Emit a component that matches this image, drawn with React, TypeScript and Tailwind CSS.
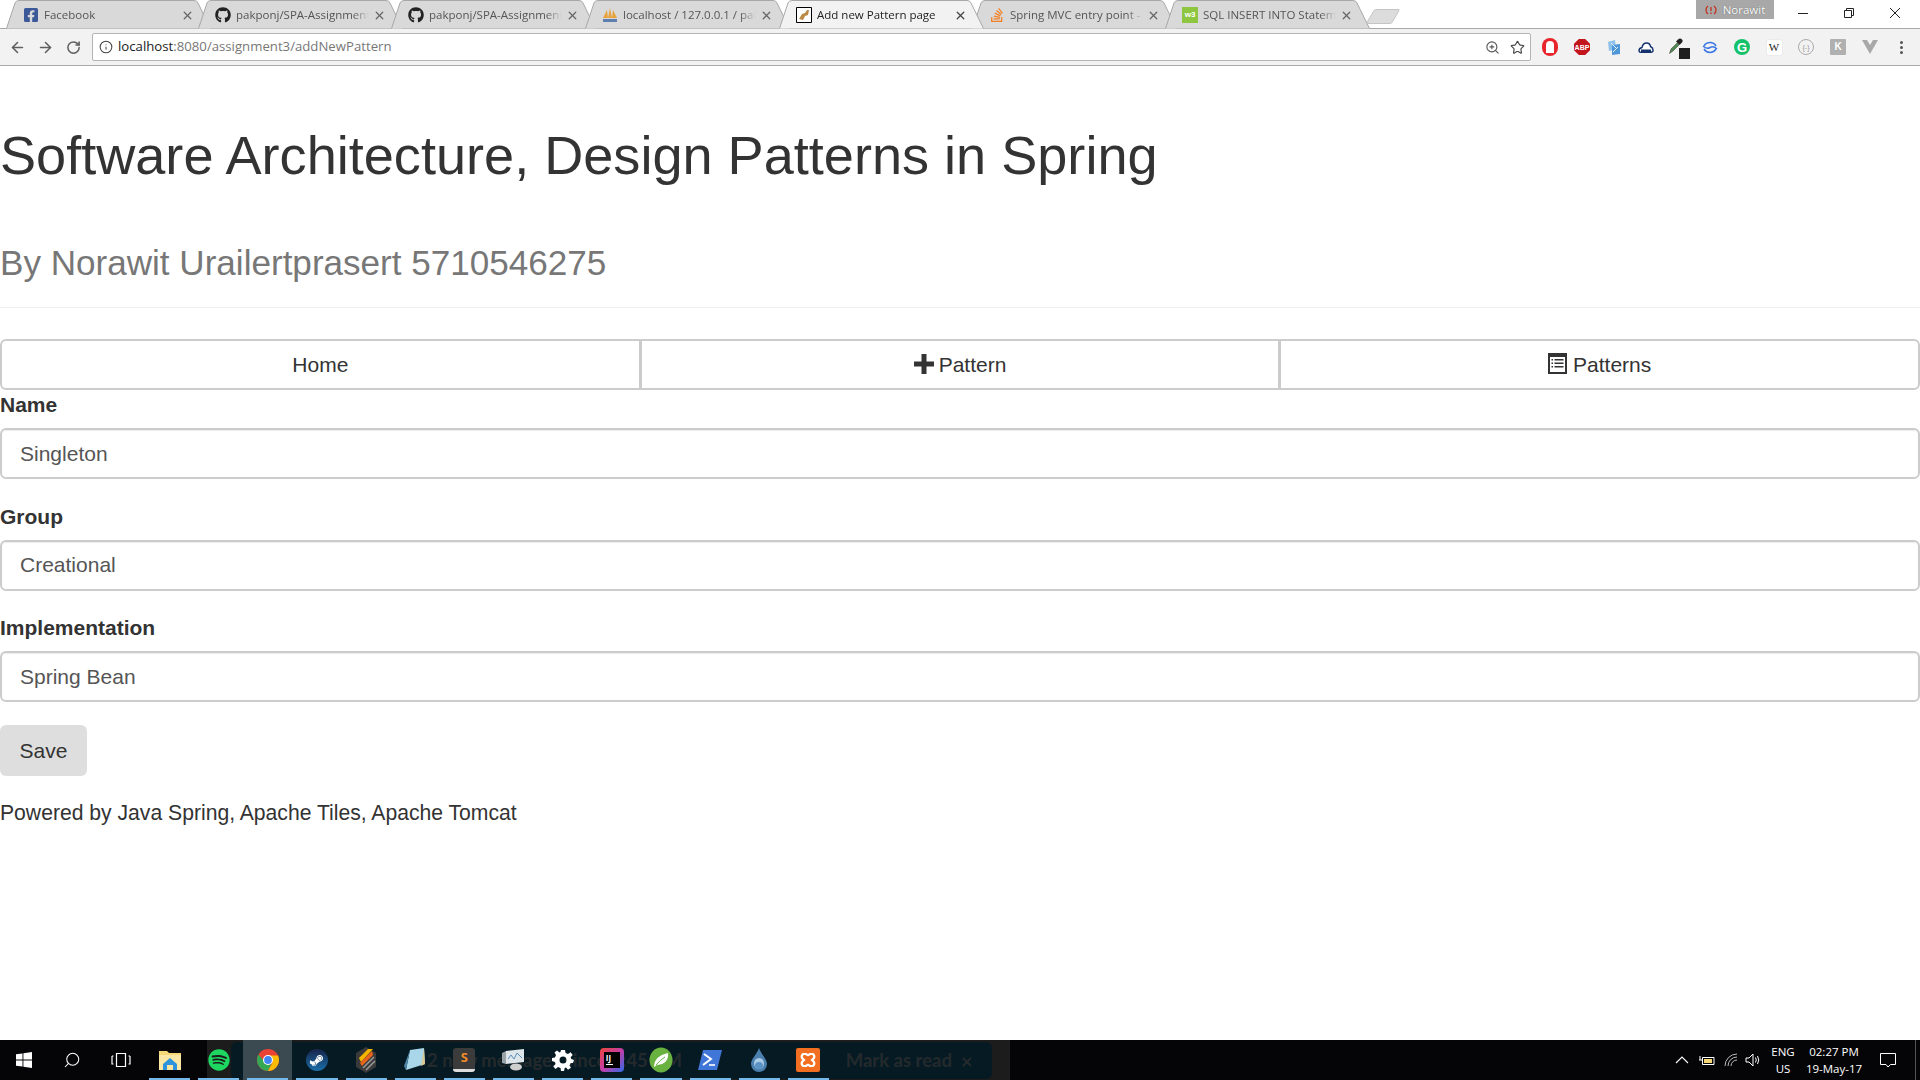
import { ArrowLeft, ArrowRight, Info, RotateCw, Search, Star, X, ZoomIn } from "lucide-react";
import { FaFacebookSquare, FaGithub, FaSpotify, FaStackOverflow, FaSteamSymbol } from "react-icons/fa";

const font = "font-['Liberation_Sans',Arial,sans-serif]";

type TabProps = {
  title: string;
  icon: React.ReactNode;
  active?: boolean;
  left: number;
};

function Tab({ title, icon, active, left }: TabProps) {
  return (
    <div
      className={`absolute top-0 h-[29px] w-[205px] ${active ? "z-10" : ""}`}
      style={{ left }}
    >
      <svg className="absolute inset-0" width="205" height="29" viewBox="0 0 205 29">
        <path
          d="M0.5 28.5 L9 3 Q10 0.5 13 0.5 L188 0.5 Q191 0.5 192 3 L204.5 28.5"
          fill={active ? "#f2f2f2" : "#d9d9d9"}
          stroke="#a8a8a8"
        />
      </svg>
      <div className="absolute left-[17px] right-[17px] top-[7px] flex h-4 items-center">
        <span className="mr-[5px] flex h-4 w-4 shrink-0 items-center justify-center">{icon}</span>
        <span
          className={`min-w-0 flex-1 overflow-hidden whitespace-nowrap text-[11.5px] leading-4 font-['Open_Sans',sans-serif] [mask-image:linear-gradient(to_right,black_88%,transparent)] ${
            active ? "text-[#222]" : "text-[#555]"
          }`}
        >
          {title}
        </span>
        <X className={`ml-1 h-[13px] w-[13px] shrink-0 ${active ? "text-[#444]" : "text-[#666]"}`} strokeWidth={2.4} />
      </div>
    </div>
  );
}

function Ext({ children }: { children: React.ReactNode }) {
  return <div className="flex h-6 w-8 items-center justify-center">{children}</div>;
}

function ExtIcons() {
  return (
    <div className="ml-[3px] flex items-center">
      <Ext>
        {/* opera hand */}
        <div className="flex h-[18px] w-4 items-center justify-center rounded-full bg-[#e8252c]">
          <div className="h-[12px] w-[8px] rounded-t-full rounded-b-[2px] bg-white" />
        </div>
      </Ext>
      <Ext>
        <div className="flex h-4 w-4 items-center justify-center bg-[#c3161c] text-[7px] font-bold leading-none text-white [clip-path:polygon(30%_0,70%_0,100%_30%,100%_70%,70%_100%,30%_100%,0_70%,0_30%)]">
          ABP
        </div>
      </Ext>
      <Ext>
        <svg width="14" height="15" viewBox="0 0 14 15">
          <path d="M1 2 L8 0 L9 9 L2 11Z" fill="#8fc1ea" />
          <path d="M5 5 L13 4 L13 14 L5 15Z" fill="#4f97d9" />
          <path d="M4 3 L9 8 M6 12 L11 7" stroke="#e6f2fb" strokeWidth="1" />
        </svg>
      </Ext>
      <Ext>
        <svg width="16" height="11" viewBox="0 0 16 11">
          <path d="M1 9 Q1 6 4 5.5 Q5 1 8.5 1 Q12 1 12.5 4.5 Q15.5 6 15 9 Q14 10.5 12 10.5 H3 Q1.5 10.5 1 9Z" fill="#fff" stroke="#14316e" strokeWidth="1.4" />
          <path d="M3 7.5 H13 V10 H3Z" fill="#14316e" />
        </svg>
      </Ext>
      <Ext>
        <div className="relative h-[18px] w-[18px]">
          <svg width="14" height="16" viewBox="0 0 14 16">
            <path d="M0.5 15.5 L2 11 L8 5 L10 7 L4 13 Z" fill="#4f8a4f" stroke="#333" strokeWidth="0.5" />
            <path d="M9 1.5 Q11 -0.5 13 1.5 Q14.5 3.5 12.5 5 L10.5 7 L7 3.5 Z" fill="#222" />
          </svg>
          <div className="absolute bottom-[-3px] right-[-3px] h-[11px] w-[11px] bg-[#1f1f1f]" />
        </div>
      </Ext>
      <Ext>
        <svg width="16" height="15" viewBox="0 0 16 15" fill="none" stroke="#3b78e7" strokeWidth="1.5">
          <path d="M2 6 A7 7 0 0 1 14 6 M14 9 A7 7 0 0 1 2 9" />
          <path d="M1 6 Q4.5 9.5 8 7.5 Q11.5 5.5 15 9" />
        </svg>
      </Ext>
      <Ext>
        <div className="flex h-4 w-4 items-center justify-center rounded-full bg-[#15c26b] text-[13px] font-bold leading-none text-white">
          G
        </div>
      </Ext>
      <Ext>
        <div className="flex h-[15px] w-[15px] items-center justify-center rounded-[1px] bg-white font-['Liberation_Serif',serif] text-[11px] leading-none text-[#222] shadow-[0_0_1px_rgba(0,0,0,0.3)]">
          W
        </div>
      </Ext>
      <Ext>
        <div className="flex h-4 w-4 items-center justify-center rounded-full border border-[#aaa] text-[7px] leading-none text-[#999]">
          {"{-}"}
        </div>
      </Ext>
      <Ext>
        <div className="flex h-4 w-4 items-center justify-center rounded-[1px] bg-[#b0b0b0] text-[10px] font-bold leading-none text-white">
          K
        </div>
      </Ext>
      <Ext>
        <svg width="16" height="14" viewBox="0 0 16 14">
          <path d="M0 0 H16 L8 14 Z" fill="#a8a8a8" />
          <path d="M5 0 H11 L8 5 Z" fill="#f2f2f2" />
        </svg>
      </Ext>
      <Ext>
        <div className="flex w-[4px] flex-col gap-[2px]">
          <div className="h-[3px] w-[3px] rounded-full bg-[#555]" />
          <div className="h-[3px] w-[3px] rounded-full bg-[#555]" />
          <div className="h-[3px] w-[3px] rounded-full bg-[#555]" />
        </div>
      </Ext>
    </div>
  );
}

function Browser() {
  return (
    <div className="shrink-0">
      <div className="relative h-[29px] border-b border-[#a8a8a8] bg-white">
        <Tab left={6} title="Facebook" icon={<FaFacebookSquare className="h-4 w-4 text-[#3b5998]" />} />
        <Tab left={198} title="pakponj/SPA-Assignment" icon={<FaGithub className="h-4 w-4 text-[#222]" />} />
        <Tab left={391} title="pakponj/SPA-Assignment" icon={<FaGithub className="h-4 w-4 text-[#222]" />} />
        <Tab
          left={585}
          title="localhost / 127.0.0.1 / pat"
          icon={
            <svg width="16" height="16" viewBox="0 0 16 16">
              <path d="M1 11 L5 3 L6 11Z M6 11 L8 1 L10 11Z M10 11 L11 3 L15 11Z" fill="#e8a23c" />
              <path d="M1 12H15V15H1Z" fill="#5f7fb0" />
            </svg>
          }
        />
        <Tab
          left={779}
          active
          title="Add new Pattern page"
          icon={
            <svg width="16" height="16" viewBox="0 0 16 16">
              <path d="M0.5 0.5H15.5V15.5H0.5Z" fill="#fff" stroke="#000" />
              <path d="M3 12 L6 7 L9 6 L11 3 L13 3 L12 8 L9 9 L7 13Z" fill="#b98a45" />
            </svg>
          }
        />
        <Tab left={972} title="Spring MVC entry point -" icon={<FaStackOverflow className="h-4 w-4 text-[#f48024]" />} />
        <Tab
          left={1165}
          title="SQL INSERT INTO Statem"
          icon={<span className="flex h-4 w-4 items-center justify-center bg-[#8ec63f] text-[8px] font-bold text-white">w3</span>}
        />
        <div className="absolute left-[1370px] top-[9px] h-[15px] w-[26px] -skew-x-[30deg] rounded-[2px] border border-[#c4c4c4] bg-[#dcdcdc]" />
        <div className="absolute left-[1696px] top-0 flex h-[19px] w-[78px] items-center justify-center gap-[6px] bg-[#a8a8a8] font-['Open_Sans',sans-serif] text-[11.5px] text-white [text-shadow:0_0_1px_#555]">
          <svg width="12" height="12" viewBox="0 0 12 12" fill="none" stroke="#c0392b" strokeWidth="1.4">
            <path d="M3 10 A5 5 0 0 1 3 2 M9 2 A5 5 0 0 1 9 10 M6 3V7 M6 8.5V10" />
          </svg>
          Norawit
        </div>
        <div className="absolute right-[2px] top-[8px] flex items-center text-[#222]">
          <div className="flex w-[46px] justify-center">
            <svg width="10" height="10" viewBox="0 0 10 10" fill="none" stroke="currentColor">
              <path d="M0 5.5H10" />
            </svg>
          </div>
          <div className="flex w-[46px] justify-center">
            <svg width="10" height="10" viewBox="0 0 10 10" fill="none" stroke="currentColor">
              <path d="M0.5 2.5H7.5V9.5H0.5Z M2.5 2.5V0.5H9.5V7.5H7.5" />
            </svg>
          </div>
          <div className="flex w-[46px] justify-center">
            <svg width="10" height="10" viewBox="0 0 10 10" fill="none" stroke="currentColor">
              <path d="M0 0L10 10 M10 0L0 10" />
            </svg>
          </div>
        </div>
      </div>
      <div className="flex h-[37px] items-center border-b border-[#a8a8a8] bg-[#f2f2f2] pl-[9px] pr-[2px]">
        <ArrowLeft className="h-[17px] w-[17px] text-[#5f5f5f]" strokeWidth={2.2} />
        <ArrowRight className="ml-[11px] h-[17px] w-[17px] text-[#5f5f5f]" strokeWidth={2.2} />
        <RotateCw className="ml-[12px] h-[15px] w-[15px] text-[#5f5f5f]" strokeWidth={2.4} />
        <div className="ml-[11px] flex h-[28px] flex-1 items-center rounded-[2px] border border-[#b4b4b4] bg-white pl-[6px] pr-[5px]">
          <Info className="h-[14px] w-[14px] text-[#444]" strokeWidth={1.8} />
          <span className="ml-[5px] flex-1 font-['Open_Sans',sans-serif] text-[13.2px] text-[#777]">
            <span className="text-[#222]">localhost</span>:8080/assignment3/addNewPattern
          </span>
          <ZoomIn className="h-[15px] w-[15px] text-[#555]" strokeWidth={1.8} />
          <Star className="ml-[10px] h-[15px] w-[15px] text-[#444]" strokeWidth={1.8} />
        </div>
        <ExtIcons />
      </div>
    </div>
  );
}

function Field({ label, value }: { label: string; value: string }) {
  return (
    <div className="mb-[25.5px] last:mb-[23px]">
      <label className="mb-[12px] block text-[21px] font-bold leading-[23px] text-[#333]">{label}</label>
      <div className="flex h-[51px] items-center rounded-[6px] border-2 border-[#ccc] bg-white px-[18px] text-[21px] text-[#555] shadow-[inset_0_1px_1px_rgba(0,0,0,0.075)]">
        {value}
      </div>
    </div>
  );
}

function NavButton({ children }: { children: React.ReactNode }) {
  return (
    <div className="-ml-px flex flex-1 items-center justify-center border-2 border-[#ccc] text-[21px] text-[#333] first:ml-0 first:rounded-l-[6px] last:rounded-r-[6px]">
      {children}
    </div>
  );
}

function Page() {
  return (
    <main className={`min-h-0 flex-1 overflow-hidden bg-white text-[#333] ${font}`}>
      <h1 className="mt-[59px] text-[54.1px] font-normal leading-[60px]">
        Software Architecture, Design Patterns in Spring
      </h1>
      <h3 className="mt-[58px] text-[35.1px] font-normal leading-[40px] text-[#777]">
        By Norawit Urailertprasert 5710546275
      </h3>
      <hr className="mt-[24px] border-[#eee]" />
      <nav className="mt-[31px] flex h-[51px]">
        <NavButton>Home</NavButton>
        <NavButton>
          <svg className="mr-[5px] -translate-y-px" width="20" height="20" viewBox="0 0 20 20" fill="#333">
            <path d="M7.5 0H12.5V7.5H20V12.5H12.5V20H7.5V12.5H0V7.5H7.5Z" />
          </svg>
          Pattern
        </NavButton>
        <NavButton>
          <svg className="mr-[6px] -translate-y-px" width="19" height="21" viewBox="0 0 19 21">
            <path d="M0 0H19V21H0Z M2 4V19H17V4Z" fill="#333" fillRule="evenodd" />
            <path d="M3.5 6H5V7.5H3.5Z M6.5 6H15.5V7.5H6.5Z M3.5 9.5H5V11H3.5Z M6.5 9.5H15.5V11H6.5Z M3.5 13H5V14.5H3.5Z M6.5 13H15.5V14.5H6.5Z" fill="#333" />
          </svg>
          Patterns
        </NavButton>
      </nav>
      <div className="mt-[3px]">
        <Field label="Name" value="Singleton" />
        <Field label="Group" value="Creational" />
        <Field label="Implementation" value="Spring Bean" />
      </div>
      <button className="h-[51px] w-[87px] rounded-[6px] bg-[#dedede] text-[21px] text-[#333]">Save</button>
      <p className="mt-[25px] text-[21.15px] leading-[24px]">Powered by Java Spring, Apache Tiles, Apache Tomcat</p>
    </main>
  );
}

function TaskIcon({ children, running, active }: { children: React.ReactNode; running?: boolean; active?: boolean }) {
  return (
    <div className={`relative flex h-10 w-[49.15px] items-center justify-center ${active ? "bg-[#3a4a50]" : ""}`}>
      {children}
      {running && <div className="absolute inset-x-[4px] bottom-0 h-[2px] bg-[#76b9ed]" />}
    </div>
  );
}

function Taskbar() {
  return (
    <footer className="relative flex h-10 shrink-0 items-center bg-[#050507] font-['Open_Sans',sans-serif] text-white">
      {/* toast sitting behind the taskbar icons */}
      <div className="absolute bottom-0 left-[207px] top-0 w-[803px] bg-[#1c1c1c]" />
      <div className="absolute bottom-px left-[231px] top-[2px] flex w-[761px] items-center justify-between rounded-[6px] bg-[#061a24] pl-[196px] pr-[18px] font-['Lato',sans-serif] text-[18.5px] font-bold text-[#242a2c]">
        <span>2 new messages since 1:45 AM</span>
        <span className="flex items-center gap-[8px]">
          Mark as read <X className="mt-[3px] h-[14px] w-[14px]" strokeWidth={3.5} />
        </span>
      </div>
      <div className="relative flex items-center">
        <div className="flex h-10 w-[48px] items-center justify-center">
          <svg width="16" height="16" viewBox="0 0 16 16" fill="#fff">
            <path d="M0 2.3 6.5 1.4V7.6H0Z M7.4 1.3 16 0V7.6H7.4Z M0 8.4H6.5V14.6L0 13.7Z M7.4 8.4H16V16L7.4 14.7Z" />
          </svg>
        </div>
        <div className="flex h-10 w-[48px] items-center justify-center">
          <Search className="h-[18px] w-[18px] -scale-x-100" strokeWidth={1.4} />
        </div>
        <div className="flex h-10 w-[49px] items-center justify-center">
          <svg width="20" height="14" viewBox="0 0 20 14" fill="none" stroke="#fff" strokeWidth="1.2">
            <path d="M5.5 0.5H14.5V13.5H5.5Z M1 3V11 H2.5 M2.5 3H1 M19 3V11 H17.5 M17.5 3H19" />
          </svg>
        </div>
        <TaskIcon running>
          <svg width="22" height="20" viewBox="0 0 22 20">
            <path d="M0 1H8L10 3H22V20H0Z" fill="#f6d776" />
            <path d="M0 5H22V20H0Z" fill="#fbe6a3" />
            <path d="M4 14L11 8 18 14V20H14V15H8V20H4Z" fill="#2c93dc" />
          </svg>
        </TaskIcon>
        <TaskIcon running>
          <FaSpotify className="h-[22px] w-[22px] text-[#1ed760]" />
        </TaskIcon>
        <TaskIcon running active>
          <svg width="22" height="22" viewBox="0 0 22 22">
            <circle cx="11" cy="11" r="11" fill="#ea4335" />
            <path d="M1.5 5.5 A11 11 0 0 0 11 22 L16 11 H6 Z" fill="#34a853" />
            <path d="M22 11 A11 11 0 0 1 11 22 L15.7 13.5 11 6.5 H21 Q22 9 22 11Z" fill="#fbbc05" />
            <circle cx="11" cy="11" r="5" fill="#fff" />
            <circle cx="11" cy="11" r="3.9" fill="#4285f4" />
          </svg>
        </TaskIcon>
        <TaskIcon running>
          <div className="flex h-[22px] w-[22px] items-center justify-center rounded-full bg-[linear-gradient(#16244a,#1a6ea8)]">
            <FaSteamSymbol className="h-[15px] w-[15px] text-white" />
          </div>
        </TaskIcon>
        <TaskIcon running>
          <svg width="22" height="26" viewBox="0 0 22 26">
            <path d="M11 0 L21 6 V20 L11 26 L1 20 V6Z" fill="#3a3a3a" />
            <path d="M4 11 L13 2 H18 L6 15Z" fill="#f5b400" />
            <path d="M5 16 L17 4 L18 8 L7 19Z" fill="#e8641b" />
            <path d="M8 21 L19 10 M11 23 L20 14" stroke="#9a9a9a" strokeWidth="1.5" />
          </svg>
        </TaskIcon>
        <TaskIcon running>
          <svg width="22" height="24" viewBox="0 0 22 24">
            <path d="M6 2 L20 0 L21 16 L2 22Z" fill="#a9d6e8" />
            <path d="M6 2 L2 22 L0 18Z" fill="#4e86a8" />
            <path d="M20 0 L21 16 L17 18Z" fill="#d8c894" />
          </svg>
        </TaskIcon>
        <TaskIcon running>
          <div className="flex h-[24px] w-[22px] items-start justify-center rounded-[3px] border-b-[3px] border-[#ddd] bg-[#3b3b3b] text-[13px] font-bold leading-[18px] text-[#f28c28]">
            S
          </div>
        </TaskIcon>
        <TaskIcon running>
          <svg width="24" height="22" viewBox="0 0 24 22">
            <path d="M4 2 L22 0 V13 L4 15Z" fill="#dfe6ea" />
            <path d="M6 10 L9 6 L12 10 L15 4 L20 9" stroke="#5a8fc0" fill="none" />
            <path d="M0 4 L4 2 V15 L0 14Z" fill="#9aa3a8" />
            <ellipse cx="14" cy="18" rx="6" ry="3.5" fill="#cfcfcf" />
          </svg>
        </TaskIcon>
        <TaskIcon running>
          <svg width="22" height="22" viewBox="0 0 22 22" fill="#fff">
            <path d="M9 1H13L13.6 4 16 5 18.6 3.3 20.7 6 18.6 8.3 19.3 10 22 11 21 14 18.7 14 17.5 16.5 19 18.7 16 20.7 14 18.6 12.7 19 12 22H9L8.5 19 6 18 3.5 20 1.3 17.5 3.5 15 3 13 0 12V9L3 8.5 4 6 2.5 3.5 5 1.5 7.5 3.5 8.5 3ZM11 7.5A3.5 3.5 0 1 0 11 14.5 3.5 3.5 0 0 0 11 7.5Z" fillRule="evenodd" />
          </svg>
        </TaskIcon>
        <TaskIcon running>
          <div className="flex h-[24px] w-[24px] items-center justify-center rounded-[4px] bg-[linear-gradient(135deg,#f0443a,#c23fa8,#2d6be8)]">
            <div className="h-[16px] w-[16px] bg-black pl-[2px] text-[8px] font-bold leading-[11px] text-white">
              IJ
              <div className="mt-px h-px w-[7px] bg-white" />
            </div>
          </div>
        </TaskIcon>
        <TaskIcon running>
          <svg width="24" height="26" viewBox="0 0 24 26">
            <ellipse cx="12" cy="13" rx="11.5" ry="12.5" fill="#6ab23f" />
            <path d="M5 20 Q5 9 19 6 Q20 17 8 18 L5 20Z" fill="#fff" />
            <path d="M7 18 Q11 13 16 10" stroke="#6ab23f" fill="none" />
          </svg>
        </TaskIcon>
        <TaskIcon running>
          <svg width="24" height="20" viewBox="0 0 24 20">
            <path d="M5 0H24L19 20H0Z" fill="#4076d8" />
            <path d="M6 4 L13 9 L5 15" stroke="#fff" strokeWidth="2" fill="none" />
            <path d="M11 15H17" stroke="#fff" strokeWidth="1.6" />
          </svg>
        </TaskIcon>
        <TaskIcon running>
          <svg width="16" height="24" viewBox="0 0 16 24">
            <path d="M8 0 C10 6 16 11 16 16 A8 8 0 0 1 0 16 C0 11 6 6 8 0Z" fill="#4a7fae" />
            <ellipse cx="8" cy="15.5" rx="5" ry="5.5" fill="#a9cbe6" />
            <ellipse cx="8" cy="17.5" rx="4" ry="3.5" fill="#5c93c4" />
          </svg>
        </TaskIcon>
        <TaskIcon running>
          <svg width="24" height="24" viewBox="0 0 24 24">
            <rect width="24" height="24" rx="2" fill="#f26f21" />
            <path d="M7 6H10Q12 8 14 6H17Q19 8 18 10 L16 12 18 14Q19 16 17 18H14Q12 16 10 18H7Q5 16 6 14 L8 12 6 10Q5 8 7 6Z" fill="none" stroke="#fff" strokeWidth="2.2" />
          </svg>
        </TaskIcon>
      </div>
      <div className="relative ml-auto flex h-10 items-center">
        <div className="flex w-6 justify-center">
          <svg width="14" height="8" viewBox="0 0 14 8" fill="none" stroke="#fff" strokeWidth="1.1">
            <path d="M1 7 L7 1 L13 7" />
          </svg>
        </div>
        <div className="flex w-[26px] justify-center">
          <svg width="16" height="12" viewBox="0 0 16 12" fill="none">
            <path d="M3.5 3.5H15V10.5H3.5Z" stroke="#fff" />
            <path d="M5 5H13V9H5Z" fill="#f6d776" />
            <path d="M0 6H3 M1 2V6" stroke="#fff" />
          </svg>
        </div>
        <div className="flex w-[22px] justify-center">
          <svg width="15" height="14" viewBox="0 0 15 14" fill="none" stroke="#bbb" strokeWidth="1">
            <path d="M1 13 A12 12 0 0 1 13 1 M4 13 A9 9 0 0 1 13 4 M7 13 A6 6 0 0 1 13 7" />
          </svg>
        </div>
        <div className="flex w-[22px] justify-center">
          <svg width="17" height="14" viewBox="0 0 17 14" fill="none" stroke="#fff" strokeWidth="1">
            <path d="M1 5H4L8 1V13L4 9H1Z M10.5 4.5Q12 7 10.5 9.5 M12.5 3Q15 7 12.5 11" />
          </svg>
        </div>
        <div className="w-[38px] text-center text-[11.5px] leading-[17px]">
          <div>ENG</div>
          <div>US</div>
        </div>
        <div className="w-[64px] text-center text-[11.5px] leading-[17px]">
          <div>02:27 PM</div>
          <div>19-May-17</div>
        </div>
        <div className="flex h-10 w-[49px] items-center justify-center pr-[6px]">
          <svg width="16" height="16" viewBox="0 0 16 16" fill="none" stroke="#fff" strokeWidth="1">
            <path d="M0.5 1.5H15.5V12.5H10.5L8 15 6 12.5H0.5Z" />
          </svg>
        </div>
        <div className="h-10 w-[5px] border-l border-[#555]" />
      </div>
    </footer>
  );
}

export default function App() {
  return (
    <div className={`flex h-[1080px] w-[1920px] flex-col overflow-hidden bg-white ${font}`}>
      <Browser />
      <Page />
      <Taskbar />
    </div>
  );
}
